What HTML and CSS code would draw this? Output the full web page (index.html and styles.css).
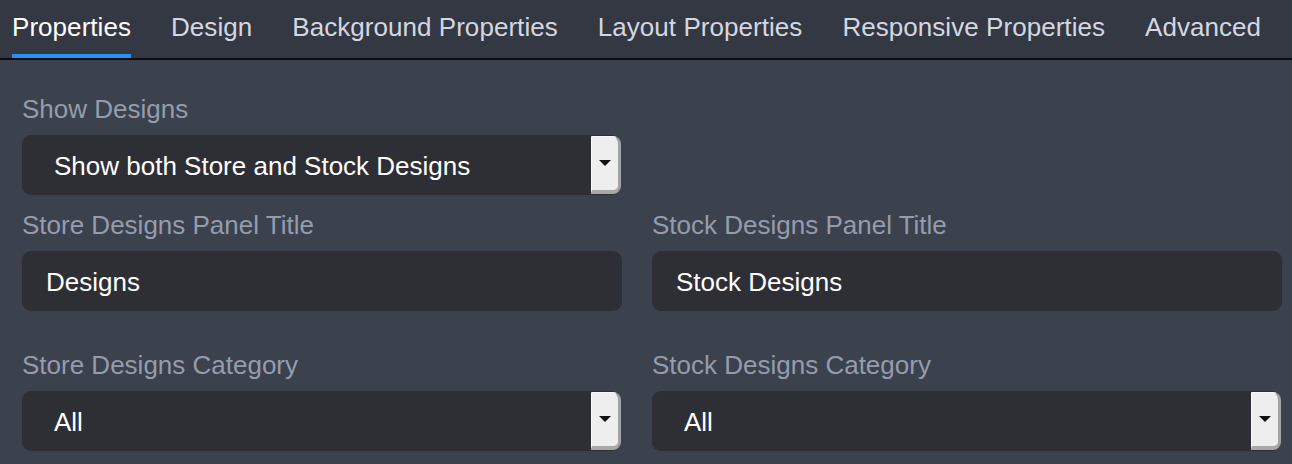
FILE: index.html
```html
<!DOCTYPE html>
<html>
<head>
<meta charset="utf-8">
<link rel="stylesheet" href="styles.css">
</head>
<body>
<nav class="tabs">
  <div class="tab active">Properties</div>
  <div class="tab">Design</div>
  <div class="tab">Background Properties</div>
  <div class="tab">Layout Properties</div>
  <div class="tab">Responsive Properties</div>
  <div class="tab">Advanced</div>
</nav>
<main class="panel">
  <div class="row">
    <div class="group">
      <div class="label">Show Designs</div>
      <div class="select"><span class="value">Show both Store and Stock Designs</span><span class="arrow-btn"><span class="arrow"></span></span></div>
    </div>
  </div>
  <div class="row row-text">
    <div class="group">
      <div class="label">Store Designs Panel Title</div>
      <div class="input">Designs</div>
    </div>
    <div class="group">
      <div class="label">Stock Designs Panel Title</div>
      <div class="input">Stock Designs</div>
    </div>
  </div>
  <div class="row">
    <div class="group">
      <div class="label">Store Designs Category</div>
      <div class="select"><span class="value">All</span><span class="arrow-btn"><span class="arrow"></span></span></div>
    </div>
    <div class="group">
      <div class="label">Stock Designs Category</div>
      <div class="select"><span class="value">All</span><span class="arrow-btn"><span class="arrow"></span></span></div>
    </div>
  </div>
</main>
</body>
</html>
```
FILE: styles.css
```css
html, body {
  margin: 0;
  padding: 0;
}
body {
  width: 1292px;
  height: 464px;
  overflow: hidden;
  background: #3c414e;
  font-family: "Liberation Sans", Arial, Helvetica, sans-serif;
  font-size: 26px;
  line-height: 30px;
}
.tabs {
  display: flex;
  gap: 40px;
  padding-left: 12px;
  height: 58px;
  background: #343843;
  border-bottom: 2px solid #0c0d10;
}
.tab {
  padding-top: 12px;
  height: 46px;
  color: #d3d7e0;
  white-space: nowrap;
  letter-spacing: 0.05px;
}
.tab.active {
  color: #ffffff;
  border-bottom: 4px solid #2b8ef0;
  height: 42px;
}
.panel {
  padding: 33px 10px 0 22px;
}
.row {
  display: grid;
  grid-template-columns: 630px 630px;
  margin-bottom: 14px;
}
.row-text {
  margin-bottom: 38px;
}
.group {
  padding-right: 30px;
}
.group + .group {
  padding-right: 0;
}
.label {
  color: #959cab;
  height: 29px;
  padding-top: 1px;
  margin-bottom: 12px;
  white-space: nowrap;
}
.select, .input {
  height: 60px;
  box-sizing: border-box;
  background: #2e2f35;
  border-radius: 9px;
  color: #ffffff;
  display: flex;
  align-items: center;
}
.value {
  padding-top: 2px;
}
.input {
  padding-left: 24px;
  padding-top: 2px;
}
.select {
  padding-left: 32px;
  margin-right: 1px;
  justify-content: space-between;
}
.arrow-btn {
  width: 30px;
  height: 58px;
  box-sizing: border-box;
  background: #eeeeee;
  border-top: 1px solid #f9f9f9;
  border-left: 1px solid #fafafa;
  border-right: 3px solid #a3a3a3;
  border-bottom: 4px solid #a9a9a9;
  border-radius: 0 8px 8px 0;
  display: flex;
  align-items: center;
  justify-content: center;
  margin-top: 1px;
  align-self: flex-start;
}
.arrow {
  width: 0;
  height: 0;
  border-left: 6px solid transparent;
  border-right: 6px solid transparent;
  border-top: 6px solid #111111;
  margin-bottom: 2px;
}
```
